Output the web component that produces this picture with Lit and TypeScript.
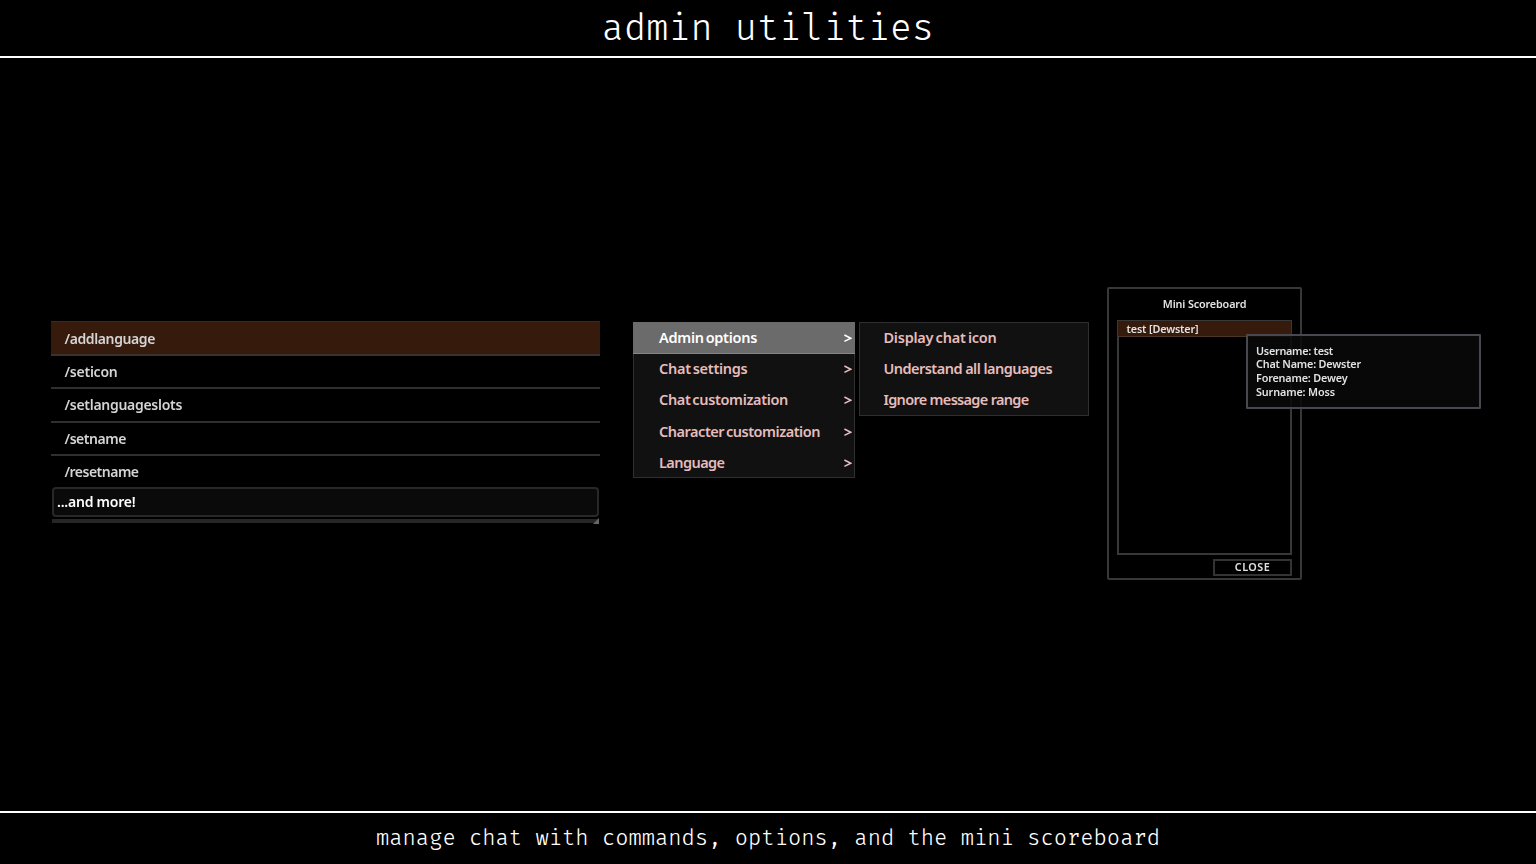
import { LitElement, html, css } from "lit";
import { customElement, property } from "lit/decorators.js";

/* A single-line label whose tracking is adjusted to fill a given width. */
@customElement("fit-label")
class FitLabel extends LitElement {
  @property() text = "";
  @property({ type: Number }) span = 0;
  static styles = css`
    :host { display: inline-block; white-space: pre; }
  `;
  render() {
    return html`<span>${this.text}</span>`;
  }
  updated() {
    const el = this.renderRoot.querySelector("span") as HTMLElement;
    el.style.letterSpacing = "0px";
    const natural = el.getBoundingClientRect().width;
    el.style.letterSpacing = `${(this.span - natural) / this.text.length}px`;
  }
}

type Item = [string, number];

@customElement("app-root")
class AppRoot extends LitElement {
  commands: Item[] = [
    ["/addlanguage", 90.5],
    ["/seticon", 53],
    ["/setlanguageslots", 117.5],
    ["/setname", 61.5],
    ["/resetname", 74],
  ];
  options: Item[] = [
    ["Admin options", 98],
    ["Chat settings", 88.5],
    ["Chat customization", 129],
    ["Character customization", 161],
    ["Language", 65.5],
  ];
  adminOptions: Item[] = [
    ["Display chat icon", 113],
    ["Understand all languages", 168.5],
    ["Ignore message range", 145],
  ];
  details: Item[] = [
    ["Username: test", 77],
    ["Chat Name: Dewster", 105],
    ["Forename: Dewey", 91.5],
    ["Surname: Moss", 79],
  ];

  static styles = css`
    :host {
      display: flex;
      flex-direction: column;
      height: 864px;
      overflow: hidden;
      background: #000;
      color: #fff;
      font-family: "Noto Sans", sans-serif;
    }
    * { box-sizing: border-box; }
    header, footer {
      flex: none;
      text-align: center;
      font-family: "Fira Code", "Fira Mono", "Liberation Mono", monospace;
      font-weight: 300;
      white-space: pre;
    }
    header { height: 58px; border-bottom: 2px solid #fff; font-size: 36px; line-height: 59px; }
    footer { height: 53px; border-top: 2px solid #fff; font-size: 21.6px; line-height: 51px; }
    main {
      flex: 1;
      display: flex;
      align-items: flex-start;
      padding: 229px 0 0 51px;
      filter: blur(0.4px);
    }
    .commands { width: 549px; margin: 34px 33px 0 0; font-size: 14px; font-weight: 600; color: #d4d4d4; }
    .command {
      height: 33.3px;
      padding-left: 13.5px;
      line-height: 32px;
      border-bottom: 2px solid #2f2f2f;
    }
    .command.active { height: 35px; line-height: 34px; border-top: 1.5px solid #3b2a21; background: #361b0d; border-bottom-color: #383230; }
    .command:last-child { border-bottom: none; }
    .more {
      height: 30px;
      margin: -2px 1px 0;
      padding-left: 3px;
      line-height: 25px;
      background: #0a0a0a;
      border: 2px solid #282828;
      border-radius: 4px;
      color: #fff;
      font-weight: 650;
    }
    .bar { height: 4px; margin: 2px 1px 0; background: #262626; display: flex; justify-content: flex-end; }
    .bar svg { display: block; margin-top: -1px; }
    .menu {
      margin-top: 35px;
      background: #111;
      border: 1px solid #2f2f2f;
      color: #e6bcbc;
      font-size: 14.5px;
      font-weight: 600;
    }
    .options { width: 222px; height: 156px; margin-right: 4px; word-spacing: -1.5px; }
    .sub { width: 230px; height: 94px; margin-right: 18px; }
    .sub .item:first-child { word-spacing: -1.2px; }
    .item {
      display: flex;
      justify-content: space-between;
      align-items: flex-start;
      height: 31.2px;
      line-height: 29.4px;
      padding: 0 2px 0 23.5px;
    }
    .options .item { padding-left: 25px; line-height: 30.4px; }
    .options .item.active { margin: -1px; height: 32px; padding: 1px 3px 0 26px; line-height: 29px; background: #6b6b6b; border-bottom: 1px solid #858585; color: #fff; }
    .item.active + .item { margin-top: 0.2px; }
    .item svg { margin-top: 12px; flex: none; }
    .item.active svg { margin-top: 11px; }
    .board {
      position: relative;
      width: 195px;
      height: 293px;
      border: 2px solid #383838;
      border-radius: 2px;
      padding: 0 8px;
      font-size: 10.8px;
      font-weight: 600;
      color: #e2e2e2;
    }
    .title { height: 31px; line-height: 29px; text-align: center; }
    .list { height: 235px; border: 2px solid #383838; }
    .player { height: 16px; margin: -1px -1px 0; padding-left: 8.5px; line-height: 15px; background: #361b0d; border-bottom: 1px solid #4c3526; }
    .close {
      width: 79px;
      height: 17px;
      margin: 4px 0 0 auto;
      border: 2px solid #333;
      line-height: 12.5px;
      text-align: center;
    }
    .tip {
      position: absolute;
      left: 137px;
      top: 45px;
      width: 235px;
      height: 75px;
      padding: 7.5px 0 0 8px;
      background: rgba(9, 9, 9, 0.87);
      border: 2px solid #484850;
      border-radius: 1px;
    }
    .detail { height: 13.8px; line-height: 14px; }
  `;

  label([text, span]: Item) {
    return html`<fit-label .text=${text} .span=${span}></fit-label>`;
  }

  chevron() {
    return html`<svg width="9" height="9" viewBox="0 0 9 9" fill="none" stroke="currentColor" stroke-width="1.6">
      <path d="M1.4 1 L7.8 4.3 L1.4 7.4" />
    </svg>`;
  }

  render() {
    return html`
      <header>admin utilities</header>
      <main>
        <section class="commands">
          <div>
            ${this.commands.map((c, i) => html`<div class="command ${i === 0 ? "active" : ""}">${this.label(c)}</div>`)}
          </div>
          <div class="more">${this.label(["...and more!", 78.5])}</div>
          <div class="bar">
            <svg width="6" height="6"><path d="M6 0V6H0Z" fill="#666" /></svg>
          </div>
        </section>
        <nav class="menu options">
          ${this.options.map(
            (o, i) => html`<div class="item ${i === 0 ? "active" : ""}">${this.label(o)}${this.chevron()}</div>`
          )}
        </nav>
        <nav class="menu sub">
          ${this.adminOptions.map((o) => html`<div class="item">${this.label(o)}</div>`)}
        </nav>
        <section class="board">
          <div class="title">${this.label(["Mini Scoreboard", 83.5])}</div>
          <div class="list">
            <div class="player">${this.label(["test [Dewster]", 72])}</div>
          </div>
          <div class="close">${this.label(["CLOSE", 35.5])}</div>
          <div class="tip">${this.details.map((d) => html`<div class="detail">${this.label(d)}</div>`)}</div>
        </section>
      </main>
      <footer>manage chat with commands, options, and the mini scoreboard</footer>
    `;
  }
}
